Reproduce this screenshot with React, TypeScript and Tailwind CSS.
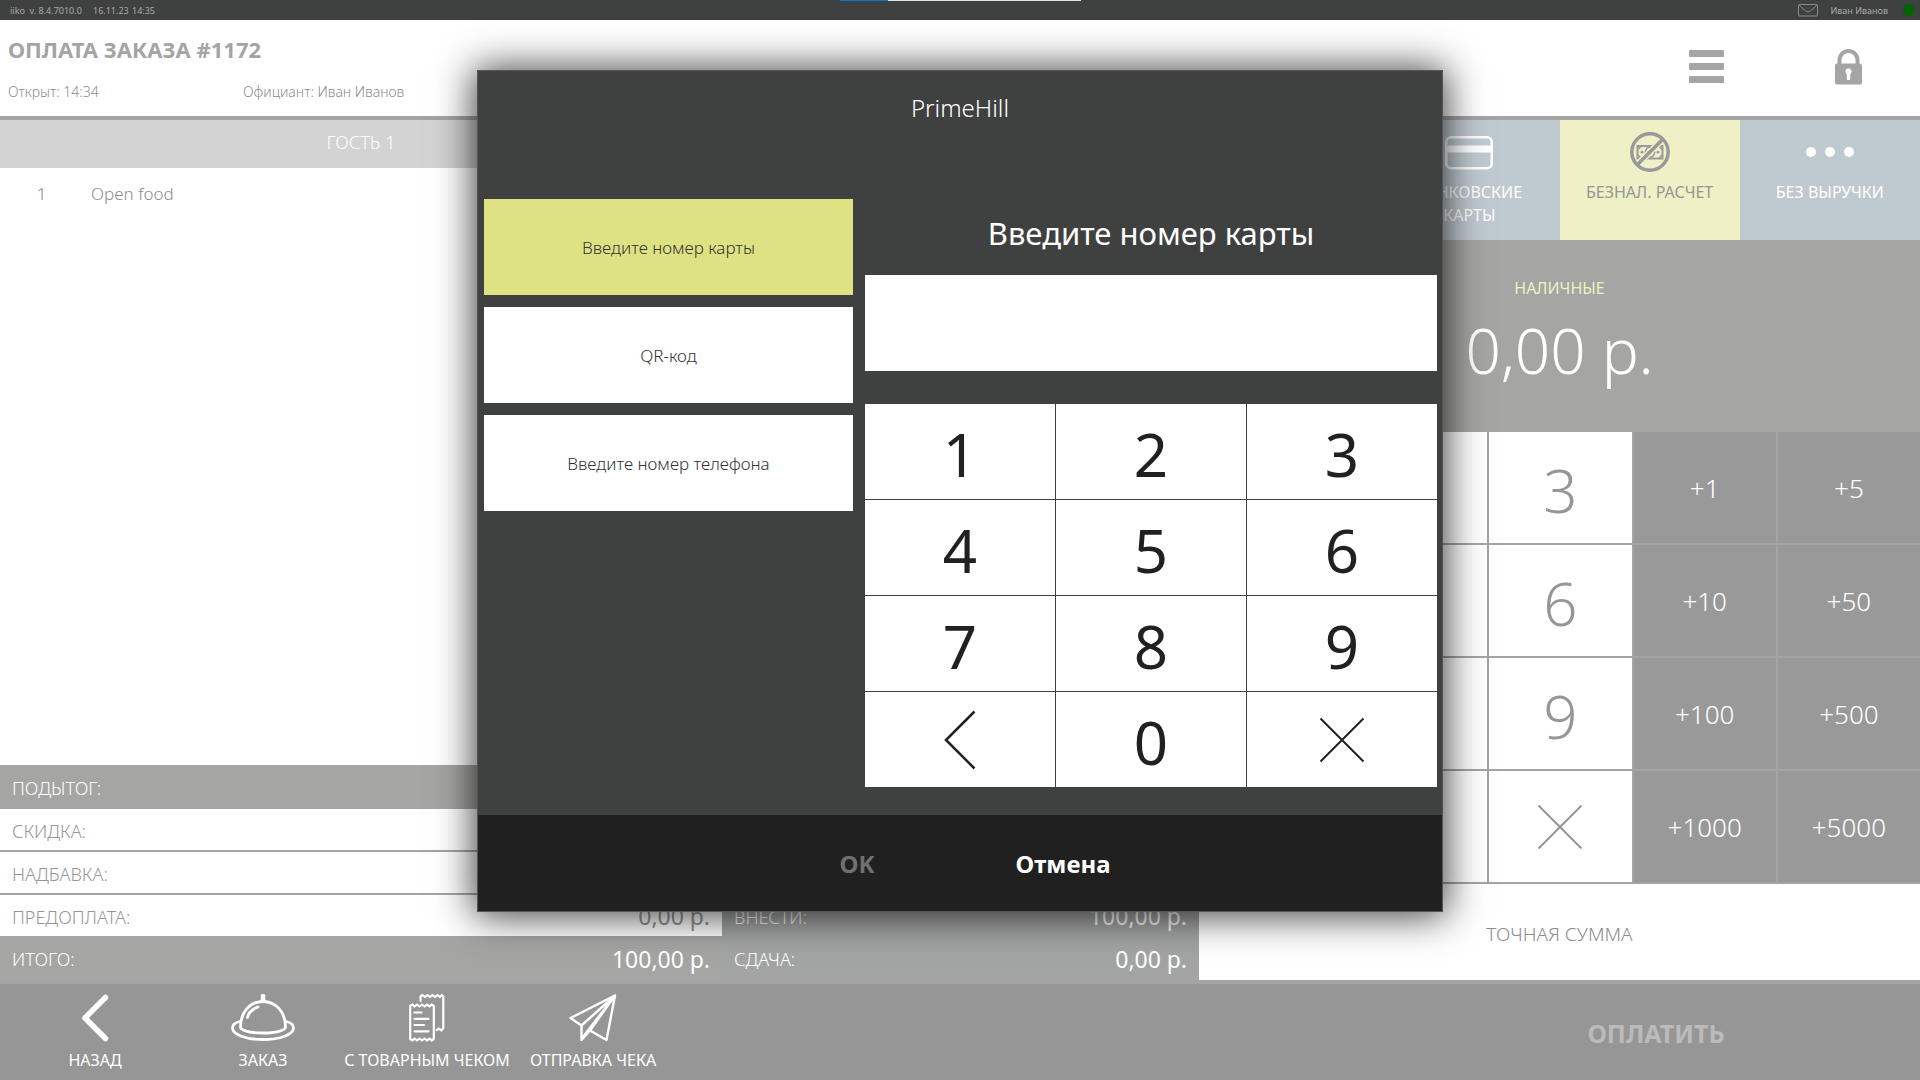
import type { ReactNode } from "react";

const CrossIcon = () => (
  <svg width="46" height="46" viewBox="0 0 46 46" fill="none" stroke="currentColor" strokeWidth="2">
    <path d="M1.5 1.5l43 43M44.5 1.5l-43 43" />
  </svg>
);

const ThinChevronIcon = () => (
  <svg width="32" height="60" viewBox="0 0 32 60" fill="none" stroke="currentColor" strokeWidth="2.5">
    <path d="M30.5 1.5L2 30l28.500 28.500" />
  </svg>
);

const EnvelopeIcon = () => (
  <svg width="20" height="13" viewBox="0 0 20 13" fill="none" stroke="#8b8c8b">
    <rect x="0.5" y="0.5" width="19" height="11.500" rx="1" />
    <path d="M1 1l6 5.500c2 1.800 4 1.800 6 0L19 1" />
  </svg>
);

const MenuIcon = () => (
  <svg width="36" height="36" viewBox="0 0 36 36" fill="#a4a5a4">
    <rect y="1" width="35" height="7" rx="1" />
    <rect y="14" width="35" height="7" rx="1" />
    <rect y="27" width="35" height="7" rx="1" />
  </svg>
);

const LockIcon = () => (
  <svg width="28" height="36" viewBox="0 0 28 36">
    <path d="M4.500 16V11a9 9 0 0 1 18 0v5" fill="none" stroke="#a4a5a4" strokeWidth="4" />
    <rect x="0" y="14.500" width="27" height="21" rx="2" fill="#a4a5a4" />
    <circle cx="13.500" cy="22.500" r="3" fill="#fff" />
    <rect x="11.800" y="23" width="3.400" height="8" rx="1" fill="#fff" />
  </svg>
);

const CardIcon = () => (
  <svg width="48" height="34" viewBox="0 0 48 34" fill="none" stroke="#fff" strokeWidth="2.500">
    <rect x="1.250" y="1.250" width="45.500" height="31" rx="5" />
    <path d="M2 13h44" strokeWidth="7" />
  </svg>
);

const NoCashIcon = () => (
  <svg width="40" height="40" viewBox="0 0 40 40" fill="none" stroke="#999999">
    <rect x="7.500" y="14" width="25" height="12.500" strokeWidth="2" />
    <path d="M8 17.500l3-3M29 14.500l3 3M8 23l3 3M29 26l3-3" strokeWidth="1.500" />
    <ellipse cx="20" cy="20.200" rx="4.500" ry="5" strokeWidth="1.800" />
    <circle cx="12" cy="20.200" r="1.400" fill="#999999" stroke="none" />
    <circle cx="28" cy="20.200" r="1.400" fill="#999999" stroke="none" />
    <path d="M7 33L33 7" stroke="#eff0c5" strokeWidth="6.500" />
    <path d="M7 33L33 7" strokeWidth="3.500" />
    <circle cx="20" cy="20" r="18.200" strokeWidth="3.500" />
  </svg>
);

const DotsIcon = () => (
  <svg width="50" height="12" viewBox="0 0 50 12" fill="#fff">
    <circle cx="6" cy="6" r="5" />
    <circle cx="25" cy="6" r="5" />
    <circle cx="44" cy="6" r="5" />
  </svg>
);

const BackIcon = () => (
  <svg width="28" height="48" viewBox="0 0 28 48" fill="none" stroke="#fff" strokeWidth="5.500" strokeLinecap="round" strokeLinejoin="round">
    <path d="M24.500 3.500L4 24l20.500 20.500" />
  </svg>
);

const ClocheIcon = () => (
  <svg width="64" height="48" viewBox="0 0 64 48" fill="none" stroke="#fff" strokeWidth="2.800" strokeLinecap="round">
    <path d="M32 2v5" strokeWidth="4.500" />
    <path d="M9.500 33C9.500 18 19 7.500 32 7.500S54.500 18 54.500 33c0 3.500-10 6-22.500 6S9.500 36.500 9.500 33z" />
    <path d="M9 27.500C4 28.500 1.500 31 1.500 34 1.500 40.500 15 45.500 32 45.500S62.500 40.500 62.500 34c0-3-2.500-5.500-7.500-6.500" />
    <path d="M16.500 23.500c1-4.500 5-8.500 10.500-10.500" />
  </svg>
);

const ReceiptIcon = () => (
  <svg width="36" height="48" viewBox="0 0 36 48" fill="none" stroke="#fff" strokeWidth="2.200" strokeLinejoin="round" strokeLinecap="round">
    <path d="M1.200 45V12l2.300-1.500 2 2 2.500-2 2.500 2 2.500-2 2.500 2 2.500-2 2.500 2 2-2 2.300 1.500v33l-2.300 1.500-2-2-2.500 2-2.500-2-2.500 2-2.500-2-2.500 2-2.500-2-2 2z" />
    <path d="M11.500 7V2.500L13.500 1l2.500 2 2.500-2 2.500 2 2.500-2 2.500 2L28.500 1 31 3l2-2 1.300 1.500V34l-2 2.500-2.500-2-2 1.500" />
    <path d="M5.500 18.500h7M5.500 24.800h14M5.500 31h9.500M5.500 37.300h14" />
  </svg>
);

const PlaneIcon = () => (
  <svg width="48" height="48" viewBox="0 0 48 48" fill="none" stroke="#fff" strokeWidth="2.400" strokeLinejoin="round">
    <path d="M46 1.500L1.500 24 12.500 31.500V46L21 36.500 37.500 46z" />
    <path d="M46 1.500L12.500 31.500M46 1.500L21 36.500M46 1.500L14 43" />
  </svg>
);

function FooterAction({ icon, label, width }: { icon: ReactNode; label: string; width: string }) {
  return (
    <button className={`${width} flex flex-col items-center pt-2.5 text-base leading-5 text-white`}>
      <span className="flex h-12 items-center">{icon}</span>
      <span className="mt-2 whitespace-nowrap">{label}</span>
    </button>
  );
}

function TotalRow({ label, value, className }: { label: string; value?: string; className: string }) {
  return (
    <div className={`${className} flex items-center justify-between px-3 pt-0.5`}>
      <span className="text-lg font-light">{label}</span>
      {value && <span className="text-[23px]">{value}</span>}
    </div>
  );
}

const PAD_ROWS = [
  ["1", "2", "3", "+1", "+5"],
  ["4", "5", "6", "+10", "+50"],
  ["7", "8", "9", "+100", "+500"],
  [",", "0", "x", "+1000", "+5000"],
];

function AmountKey({ value, column }: { value: string; column: number }) {
  const base = "flex items-center justify-center border-b-2 border-l-2 border-[#a4a4a4]";
  if (column > 2)
    return <button className={`${base} bg-[#999999] pt-0.5 text-[26px] font-light text-white`}>{value}</button>;
  if (column < 2) return <button aria-label={value} className={`${base} bg-white`} />;
  if (value === "x")
    return (
      <button aria-label="Очистить" className={`${base} bg-white text-[#969696]`}>
        <CrossIcon />
      </button>
    );
  return <button className={`${base} bg-white pt-1 text-[60px] leading-none font-light text-[#969696]`}>{value}</button>;
}

const DIALOG_KEYS = ["1", "2", "3", "4", "5", "6", "7", "8", "9", "back", "0", "clear"];

function DialogKey({ value }: { value: string }) {
  const base = "flex items-center justify-center bg-white text-[#212121]";
  if (value === "back")
    return (
      <button aria-label="Стереть" className={base}>
        <ThinChevronIcon />
      </button>
    );
  if (value === "clear")
    return (
      <button aria-label="Очистить" className={base}>
        <CrossIcon />
      </button>
    );
  return <button className={`${base} pt-1 text-[60px] leading-none`}>{value}</button>;
}

function CardDialog() {
  return (
    <div className="absolute inset-0 flex items-start justify-center pt-[71px]">
      <section
        role="dialog"
        aria-labelledby="dialog-title"
        className="w-[964px] bg-[#3f4140] shadow-[0_1px_36px_4px_rgba(0,0,0,0.75)] outline outline-[#555756]"
      >
        <h2 id="dialog-title" className="mb-14 flex h-[72px] items-center justify-center pt-0.5 text-2xl font-light text-white">
          PrimeHill
        </h2>
        <div className="grid grid-cols-[369px_1fr] gap-3 pr-[5px] pb-7 pl-1.5">
          <div className="flex flex-col gap-3 text-[17px] font-light text-[#333333]">
            <button className="h-24 bg-[#dfe283] pt-0.5">Введите номер карты</button>
            <button className="h-24 bg-white pt-0.5">QR-код</button>
            <button className="h-24 bg-white pt-0.5">Введите номер телефона</button>
          </div>
          <div>
            <label htmlFor="card-number" className="mb-2 flex h-[68px] items-center justify-center text-[31px] text-white">
              Введите номер карты
            </label>
            <input id="card-number" className="block h-24 w-full bg-white px-4 text-4xl text-[#212121] outline-none" />
            <div className="mt-[33px] grid auto-rows-[95px] grid-cols-3 gap-px">
              {DIALOG_KEYS.map((key) => (
                <DialogKey key={key} value={key} />
              ))}
            </div>
          </div>
        </div>
        <footer className="flex h-24 justify-center bg-[#202020] pt-0.5 text-2xl font-bold">
          <button disabled className="w-[206px] text-[#707070]">
            OK
          </button>
          <button className="w-[206px] text-white">Отмена</button>
        </footer>
      </section>
    </div>
  );
}

export default function App() {
  return (
    <div className="relative flex min-h-screen flex-col overflow-hidden bg-white font-['Noto_Sans','Open_Sans',sans-serif]">
      <div className="relative flex h-5 items-center justify-between bg-[#3f4140] pr-[5px] pl-2.5 text-[9px] leading-none text-[#a8a9a8]">
        <div className="flex">
          <span className="w-[83px] whitespace-pre">iiko  v. 8.4.7010.0</span>
          <span className="w-[39px]">16.11.23</span>
          <span>14:35</span>
        </div>
        <div className="flex items-center">
          <EnvelopeIcon />
          <span className="ml-3">Иван Иванов</span>
          <span className="ml-[15px] h-3 w-3 rounded-full bg-[#006400]" />
        </div>
        <div className="absolute inset-x-0 top-0 flex h-px justify-center">
          <span className="w-12 bg-[#0078d4]" />
          <span className="w-[193px] bg-[#e2e4e2]" />
        </div>
      </div>

      <header className="flex h-[100px] justify-between border-b-4 border-[#a4a4a4] pl-2 text-[#a4a4a4]">
        <div className="pt-3.5">
          <h1 className="text-[22px] leading-[30px] font-bold">ОПЛАТА ЗАКАЗА #1172</h1>
          <div className="mt-[18px] flex text-sm leading-5 font-light text-[#8c8c8c]">
            <span className="w-[235px]">Открыт: 14:34</span>
            <span>Официант: Иван Иванов</span>
          </div>
        </div>
        <div className="flex h-[94px] items-center">
          <button aria-label="Меню" className="flex w-[142px] justify-center">
            <MenuIcon />
          </button>
          <button aria-label="Блокировка" className="flex w-[142px] justify-center">
            <LockIcon />
          </button>
        </div>
      </header>

      <main className="grid flex-1 grid-cols-[722fr_477fr_721fr] border-b-4 border-[#a3a5a4]">
        <section className="flex flex-col text-[#969696]">
          <h2 className="flex h-12 items-center justify-center bg-[#d3d3d3] pb-1 text-lg font-light text-white">ГОСТЬ 1</h2>
          <div className="flex flex-1 pt-3.5 text-[17px] leading-6 font-light text-[#8c8c8c]">
            <span className="w-[83px] text-center">1</span>
            <span className="ml-2">Open food</span>
          </div>
          <TotalRow label="ПОДЫТОГ:" className="h-11 bg-[#a5a5a3] text-white" />
          <TotalRow label="СКИДКА:" className="h-[43px] border-b-2 border-[#a4a4a4]" />
          <TotalRow label="НАДБАВКА:" className="h-[43px] border-b-2 border-[#a4a4a4]" />
          <TotalRow label="ПРЕДОПЛАТА:" value="0,00 р." className="h-[41px]" />
          <TotalRow label="ИТОГО:" value="100,00 р." className="h-11 bg-[#a5a5a3] text-white" />
        </section>

        <section className="flex flex-col justify-end bg-[#a3a5a4] text-white">
          <TotalRow label="ВНЕСТИ:" value="100,00 р." className="h-[41px]" />
          <TotalRow label="СДАЧА:" value="0,00 р." className="h-11" />
        </section>

        <section className="flex flex-col">
          <div className="grid h-[120px] grid-cols-4 text-base leading-[23px] text-white">
            <button aria-label="Наличные" className="bg-[#bfcad0]" />
            <button className="flex flex-col items-center bg-[#bfcad0]">
              <span className="flex h-[61px] items-center pt-1">
                <CardIcon />
              </span>
              <span>БАНКОВСКИЕ</span>
              <span>КАРТЫ</span>
            </button>
            <button className="flex flex-col items-center bg-[#eff0c5] text-[#969696]">
              <span className="flex h-[61px] items-center pt-0.5">
                <NoCashIcon />
              </span>
              <span>БЕЗНАЛ. РАСЧЕТ</span>
            </button>
            <button className="flex flex-col items-center bg-[#bfcad0]">
              <span className="flex h-[61px] items-center pt-0.5">
                <DotsIcon />
              </span>
              <span>БЕЗ ВЫРУЧКИ</span>
            </button>
          </div>
          <div className="flex h-48 flex-col items-center bg-[#a5a5a3] pt-9">
            <span className="text-base leading-6 text-[#eef0c4]">НАЛИЧНЫЕ</span>
            <span className="mt-3 text-[62px] leading-[76px] font-light text-white">0,00 р.</span>
          </div>
          <div className="grid flex-1 auto-rows-fr grid-cols-5">
            {PAD_ROWS.map((row) => row.map((value, column) => <AmountKey key={value} value={value} column={column} />))}
          </div>
          <button className="h-24 bg-white pt-1 text-[19px] font-light text-[#8c8c8c]">ТОЧНАЯ СУММА</button>
        </section>
      </main>

      <footer className="flex h-24 justify-between bg-[#969696]">
        <nav className="flex">
          <FooterAction icon={<BackIcon />} label="НАЗАД" width="w-[190px]" />
          <FooterAction icon={<ClocheIcon />} label="ЗАКАЗ" width="w-[146px]" />
          <FooterAction icon={<ReceiptIcon />} label="С ТОВАРНЫМ ЧЕКОМ" width="w-[182px]" />
          <FooterAction icon={<PlaneIcon />} label="ОТПРАВКА ЧЕКА" width="w-[150px]" />
        </nav>
        <button disabled className="w-[528px] pt-1 text-[25px] font-bold text-[#bbbbbb]">
          ОПЛАТИТЬ
        </button>
      </footer>

      <CardDialog />
    </div>
  );
}
